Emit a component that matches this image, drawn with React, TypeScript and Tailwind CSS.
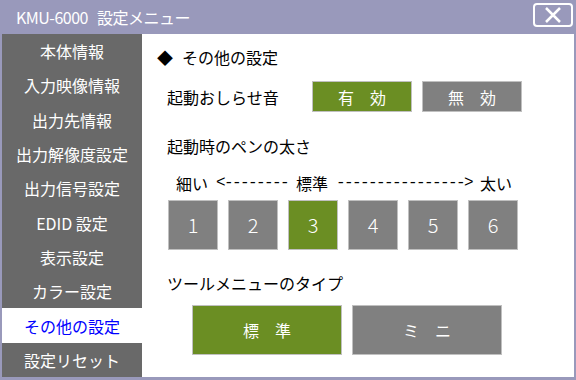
import React from 'react';

const menuItems = [
  '本体情報',
  '入力映像情報',
  '出力先情報',
  '出力解像度設定',
  '出力信号設定',
  'EDID 設定',
  '表示設定',
  'カラー設定',
  'その他の設定',
  '設定リセット',
];

const font = { fontFamily: '"Noto Sans CJK JP", "Noto Sans", sans-serif' };
const mono = { fontFamily: '"Liberation Mono", monospace' };

const App: React.FC = () => {
  const selected = 8;
  const pen = 3;

  return (
    <div
      className="w-[576px] h-[380px] bg-[#9999bb] flex flex-col overflow-hidden text-[16px] leading-none"
      style={font}
    >
      {/* title bar */}
      <div className="h-[34px] flex items-center justify-between pl-[16px] pr-[3px]">
        <span className="text-white text-[16px] tracking-[-0.5px]">
          KMU-6000<span className="ml-[9px]">設定メニュー</span>
        </span>
        <button className="w-[40px] h-[24px] mb-[4px] border-2 border-white rounded-[4px] flex items-center justify-center">
          <svg width="16" height="16" viewBox="0 0 16 16">
            <path d="M1 1 L15 15 M15 1 L1 15" stroke="white" strokeWidth="2.5" />
          </svg>
        </button>
      </div>

      <div className="flex-1 flex mx-[2px] mb-[3px]">
        {/* side menu */}
        <div className="w-[140px] bg-[#696969] flex flex-col">
          {menuItems.map((m, i) => (
            <div
              key={m}
              className={
                'flex-1 flex items-center justify-center text-[16px] ' +
                (i === selected ? 'bg-white text-[#0000ff]' : 'text-white')
              }
            >
              {m}
            </div>
          ))}
        </div>

        {/* content */}
        <div className="flex-1 bg-white flex flex-col text-black">
          <div className="h-[20px] mt-[13px] ml-[15px] flex items-center">
            <span className="mr-[9px]">◆</span>
            <span>その他の設定</span>
          </div>

          <div className="h-[31px] mt-[14px] ml-[25px] flex items-center">
            <span className="w-[145px]">起動おしらせ音</span>
            <div className="flex gap-[10px]">
              <div className="w-[100px] h-[31px] bg-[#6b8e23] border border-[#c0c0c0] text-white flex items-center justify-center">
                有　効
              </div>
              <div className="w-[100px] h-[31px] bg-[#808080] border border-[#c0c0c0] text-white flex items-center justify-center">
                無　効
              </div>
            </div>
          </div>

          <div className="h-[20px] mt-[24px] ml-[25px] flex items-center">起動時のペンの太さ</div>

          <div className="h-[20px] mt-[17px] ml-[34px] flex items-center whitespace-pre">
            <span className="w-[40px]">細い</span>
            <span className="w-[80px] tracking-[-1.6px]" style={mono}>
              {'<--------'}
            </span>
            <span className="w-[40px]">標準</span>
            <span className="w-[144px] tracking-[-1.6px]" style={mono}>
              {'---------------->'}
            </span>
            <span>太い</span>
          </div>

          <div className="mt-[7px] ml-[26px] flex gap-[10px]">
            {[1, 2, 3, 4, 5, 6].map(n => (
              <div
                key={n}
                className={
                  'w-[50px] h-[50px] border border-[#c0c0c0] text-white text-[20px] font-light flex items-center justify-center ' +
                  (n === pen ? 'bg-[#6b8e23]' : 'bg-[#808080]')
                }
              >
                {n}
              </div>
            ))}
          </div>

          <div className="h-[20px] mt-[23px] ml-[25px] flex items-center">ツールメニューのタイプ</div>

          <div className="mt-[12px] ml-[50px] flex gap-[10px]">
            <div className="w-[150px] h-[50px] bg-[#6b8e23] border border-[#c0c0c0] text-white flex items-center justify-center">
              標　準
            </div>
            <div className="w-[150px] h-[50px] bg-[#808080] border border-[#c0c0c0] text-white flex items-center justify-center">
              ミ　ニ
            </div>
          </div>
        </div>
      </div>
    </div>
  );
};

export default App;
